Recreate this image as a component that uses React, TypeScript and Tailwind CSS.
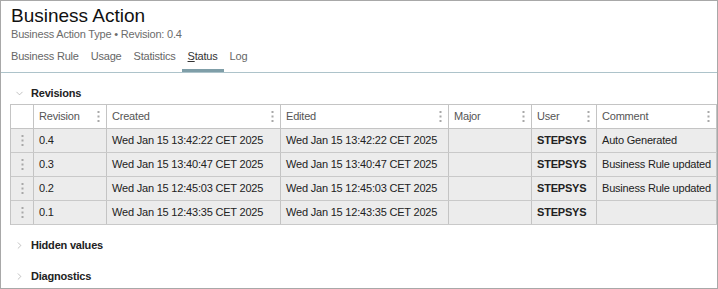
import { ChevronDown, ChevronRight } from 'lucide-react';

const rows = [
  { rev: '0.4', created: 'Wed Jan 15 13:42:22 CET 2025', edited: 'Wed Jan 15 13:42:22 CET 2025', major: '', user: 'STEPSYS', comment: 'Auto Generated' },
  { rev: '0.3', created: 'Wed Jan 15 13:40:47 CET 2025', edited: 'Wed Jan 15 13:40:47 CET 2025', major: '', user: 'STEPSYS', comment: 'Business Rule updated' },
  { rev: '0.2', created: 'Wed Jan 15 12:45:03 CET 2025', edited: 'Wed Jan 15 12:45:03 CET 2025', major: '', user: 'STEPSYS', comment: 'Business Rule updated' },
  { rev: '0.1', created: 'Wed Jan 15 12:43:35 CET 2025', edited: 'Wed Jan 15 12:43:35 CET 2025', major: '', user: 'STEPSYS', comment: '' },
];

const cols = 'grid grid-cols-[23px_73px_174px_168px_83px_65px_1fr]';

export default function App() {
  return (
    <div className="w-[718px] h-[289px] border border-[#a8a8a8] bg-white overflow-hidden text-[11px] tracking-[-0.2px] text-[#222] font-['Liberation_Sans',Arial,sans-serif]">
      {/* Header */}
      <div className="px-[10px] pt-[4px]">
        <h1 className="text-[19px] leading-[21px] tracking-normal text-[#111]">Business Action</h1>
        <p className="mt-[1px] text-[11px] leading-[14px] text-[#6b6b6b]">Business Action Type • Revision: 0.4</p>
      </div>

      {/* Tabs */}
      <div className="flex px-[4px] mt-[3px] border-b border-[#adc3ca]">
        <Tab label="Business Rule" />
        <Tab label="Usage" />
        <Tab label="Statistics" />
        <Tab label="Status" active />
        <Tab label="Log" />
      </div>

      {/* Revisions */}
      <div className="mt-[10px]">
        <Section title="Revisions" open />
      </div>
      <div className="ml-[9px] mt-[1px] border-l border-t border-[#c4c4c4]">
        <div className={`${cols} h-[24px] bg-white text-[#555] border-b border-[#c4c4c4]`}>
          <div className="border-r border-[#c4c4c4]" />
          <HeadCell label="Revision" />
          <HeadCell label="Created" />
          <HeadCell label="Edited" />
          <HeadCell label="Major" />
          <HeadCell label="User" />
          <HeadCell label="Comment" />
        </div>
        {rows.map((r) => (
          <div key={r.rev} className={`${cols} h-[24px] bg-[#ececec] border-b border-[#c9c9c9]`}>
            <div className="flex items-center justify-center border-r border-[#c4c4c4]">
              <Kebab />
            </div>
            <Cell>{r.rev}</Cell>
            <Cell>{r.created}</Cell>
            <Cell>{r.edited}</Cell>
            <Cell>{r.major}</Cell>
            <Cell bold>{r.user}</Cell>
            <Cell>{r.comment}</Cell>
          </div>
        ))}
      </div>

      <div className="mt-[10px]">
        <Section title="Hidden values" />
      </div>
      <div className="mt-[11px]">
        <Section title="Diagnostics" />
      </div>
    </div>
  );
}

function Tab({ label, active }: { label: string; active?: boolean }) {
  return (
    <div className={`px-[6px] h-[28px] pb-[1px] flex items-center border-b-[3px] ${active ? 'border-[#7f9ea8] text-[#333]' : 'border-transparent text-[#666]'}`}>
      {active ? (
        <span>
          <span className="underline">{label[0]}</span>
          {label.slice(1)}
        </span>
      ) : (
        label
      )}
    </div>
  );
}

function Section({ title, open }: { title: string; open?: boolean }) {
  return (
    <div className="flex items-center h-[20px] pl-[13px]">
      {open ? (
        <ChevronDown size={11} strokeWidth={1.3} className="text-[#999]" />
      ) : (
        <ChevronRight size={11} strokeWidth={1.3} className="text-[#999]" />
      )}
      <span className="ml-[6px] font-bold text-[#222]">{title}</span>
    </div>
  );
}

function HeadCell({ label }: { label: string }) {
  return (
    <div className="flex items-center justify-between pl-[5px] pr-[6px] border-r border-[#c4c4c4]">
      <span>{label}</span>
      <Kebab />
    </div>
  );
}

function Cell({ children, bold }: { children: React.ReactNode; bold?: boolean }) {
  return (
    <div className={`flex items-center pl-[5px] border-r border-[#c4c4c4] whitespace-nowrap overflow-hidden ${bold ? 'font-bold' : ''}`}>
      {children}
    </div>
  );
}

function Kebab() {
  return (
    <svg width="3" height="11" viewBox="0 0 3 11" className="text-[#a8a8a8]" fill="currentColor">
      <rect x="0.5" y="0" width="2" height="2" />
      <rect x="0.5" y="4.5" width="2" height="2" />
      <rect x="0.5" y="9" width="2" height="2" />
    </svg>
  );
}
